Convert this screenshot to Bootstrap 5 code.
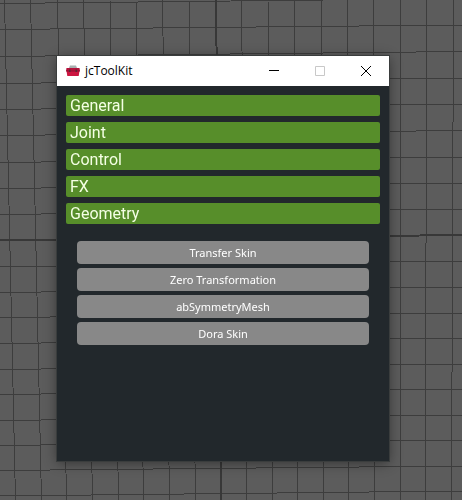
<!DOCTYPE html>
<html lang="en">
<head>
<meta charset="utf-8">
<meta name="viewport" content="width=device-width, initial-scale=1">
<title>jcToolKit</title>
<link rel="stylesheet" href="https://cdn.jsdelivr.net/npm/bootstrap@5.3.0/dist/css/bootstrap.min.css">
<style>
  body { background: #5c5c5c; font-family: "Noto Sans", "Open Sans", sans-serif; }
  .viewport-grid { z-index: -1; fill: none; stroke: #3d3d3d; stroke-width: 1; shape-rendering: crispEdges; }
  .viewport-grid .axis { stroke: #383838; stroke-width: 2; }
  .desk { padding: 56px 73px 39px 57px; }
  .tool-window { background: #22282c; box-shadow: 0 0 0 1px #3a3d3d, 0 2px 12px rgba(0, 0, 0, .45); }
  .title-bar { height: 30px; color: #000; }
  .title-text { font: 12px/18px "Open Sans", "Noto Sans", sans-serif; }
  .caption-btn { width: 46px; }
  .caption-btn:disabled { opacity: 1; border: 0; }
  .tool-body { padding: 9px; }
  .section-btn { height: 21px; padding: 1px 4px 0; font-family: Roboto, "Noto Sans", sans-serif; font-size: 16px; line-height: 20px; color: #f4ffe4; background: #578e2a; border: 0; border-radius: 2px; }
  .section-btn:hover { color: #fff; background: #62993a; }
  .stack { gap: 6px; }
  .skin-tools { gap: 4px; padding: 17px 11px 0; }
  .tool-btn { height: 23px; padding: 0; font-size: 11px; line-height: 23px; color: #fff; background: #888; border: 0; border-radius: 4px; }
  .tool-btn:hover { color: #fff; background: #969696; }
</style>
</head>
<body>
<svg class="viewport-grid position-fixed top-0 start-0 w-100 h-100" viewBox="0 0 462 500" preserveAspectRatio="xMidYMid slice" aria-hidden="true">
  <path d="M0 3.5L462 -1.5M0 29.5L462 25M0 56.5L462 51.5M0 83.5L462 78M0 109.5L462 104M0 135.5L462 130.5M0 162.5L462 157M0 188.5L462 183M0 214.5L462 209M0 267L462 261M0 292.5L462 287M0 317.5L462 313M0 343.5L462 338M0 369.5L462 364M0 394.5L462 389M0 420.5L462 415M0 445.5L462 440M0 470.5L462 466M0 496L462 491"/>
  <path d="M4.500 0L15.500 500M30.500 0L41.500 500M57.500 0L66.500 500M83.500 0L92.500 500M110 0L118.500 500M136 0L143.500 500M162.500 0L169.500 500M189 0L195.500 500M241.500 0L246.500 500M268 0L273 500M294 0L297.500 500M321 0L324 500M347.500 0L348.500 500M373.500 0L374.500 500M400.500 0L400.500 500M426.500 0L425.500 500M453.500 0L451.500 500"/>
  <path class="axis" d="M0 240.500L462 235M216 0L221.500 500"/>
</svg>

<main class="desk d-flex flex-column min-vh-100">
  <section class="tool-window d-flex flex-column flex-grow-1" aria-label="jcToolKit">
    <header class="title-bar d-flex bg-white">
      <div class="d-flex align-items-center flex-grow-1 gap-1 ps-2">
        <svg width="16" height="16" viewBox="0 0 16 16" aria-hidden="true">
          <path d="M4 5l1-2.500h6L12 5z" fill="#a8b0b0"/>
          <path d="M1.500 5h13l.5 3H1z" fill="#b5123b"/>
          <path d="M1.500 8h13l-.8 5H2.300z" fill="#cc1540"/>
          <path d="M1 7.500h14v1H1z" fill="#8e0c30"/>
          <path d="M4 6.500h1.500V9H4zM10.500 6.500H12V9h-1.500z" fill="#5a2835"/>
        </svg>
        <span class="title-text">jcToolKit</span>
      </div>
      <button type="button" class="caption-btn btn p-0 rounded-0 border-0 d-flex align-items-center justify-content-center" aria-label="Minimize">
        <svg width="12" height="12" viewBox="0 0 12 12"><path d="M1 5.500h10" stroke="#000"/></svg>
      </button>
      <button type="button" class="caption-btn btn p-0 rounded-0 border-0 d-flex align-items-center justify-content-center" aria-label="Maximize" disabled>
        <svg width="12" height="12" viewBox="0 0 12 12"><path d="M1.500 1.500h9v9h-9z" fill="none" stroke="#c8c8c8"/></svg>
      </button>
      <button type="button" class="caption-btn btn p-0 rounded-0 border-0 d-flex align-items-center justify-content-center" aria-label="Close">
        <svg width="12" height="12" viewBox="0 0 12 12"><path d="M1 1l10 10M11 1L1 11" stroke="#000"/></svg>
      </button>
    </header>

    <div class="tool-body">
      <div class="stack d-flex flex-column">
        <button type="button" class="section-btn btn text-start">General</button>
        <button type="button" class="section-btn btn text-start">Joint</button>
        <button type="button" class="section-btn btn text-start">Control</button>
        <button type="button" class="section-btn btn text-start">FX</button>
        <button type="button" class="section-btn btn text-start" data-bs-toggle="collapse" data-bs-target="#geometryTools" aria-expanded="true" aria-controls="geometryTools">Geometry</button>
      </div>
      <div id="geometryTools" class="collapse show">
        <div class="skin-tools d-flex flex-column">
          <button type="button" class="tool-btn btn">Transfer Skin</button>
          <button type="button" class="tool-btn btn">Zero Transformation</button>
          <button type="button" class="tool-btn btn">abSymmetryMesh</button>
          <button type="button" class="tool-btn btn">Dora Skin</button>
        </div>
      </div>
    </div>
  </section>
</main>
<script src="https://cdn.jsdelivr.net/npm/bootstrap@5.3.0/dist/js/bootstrap.bundle.min.js"></script>
</body>
</html>
